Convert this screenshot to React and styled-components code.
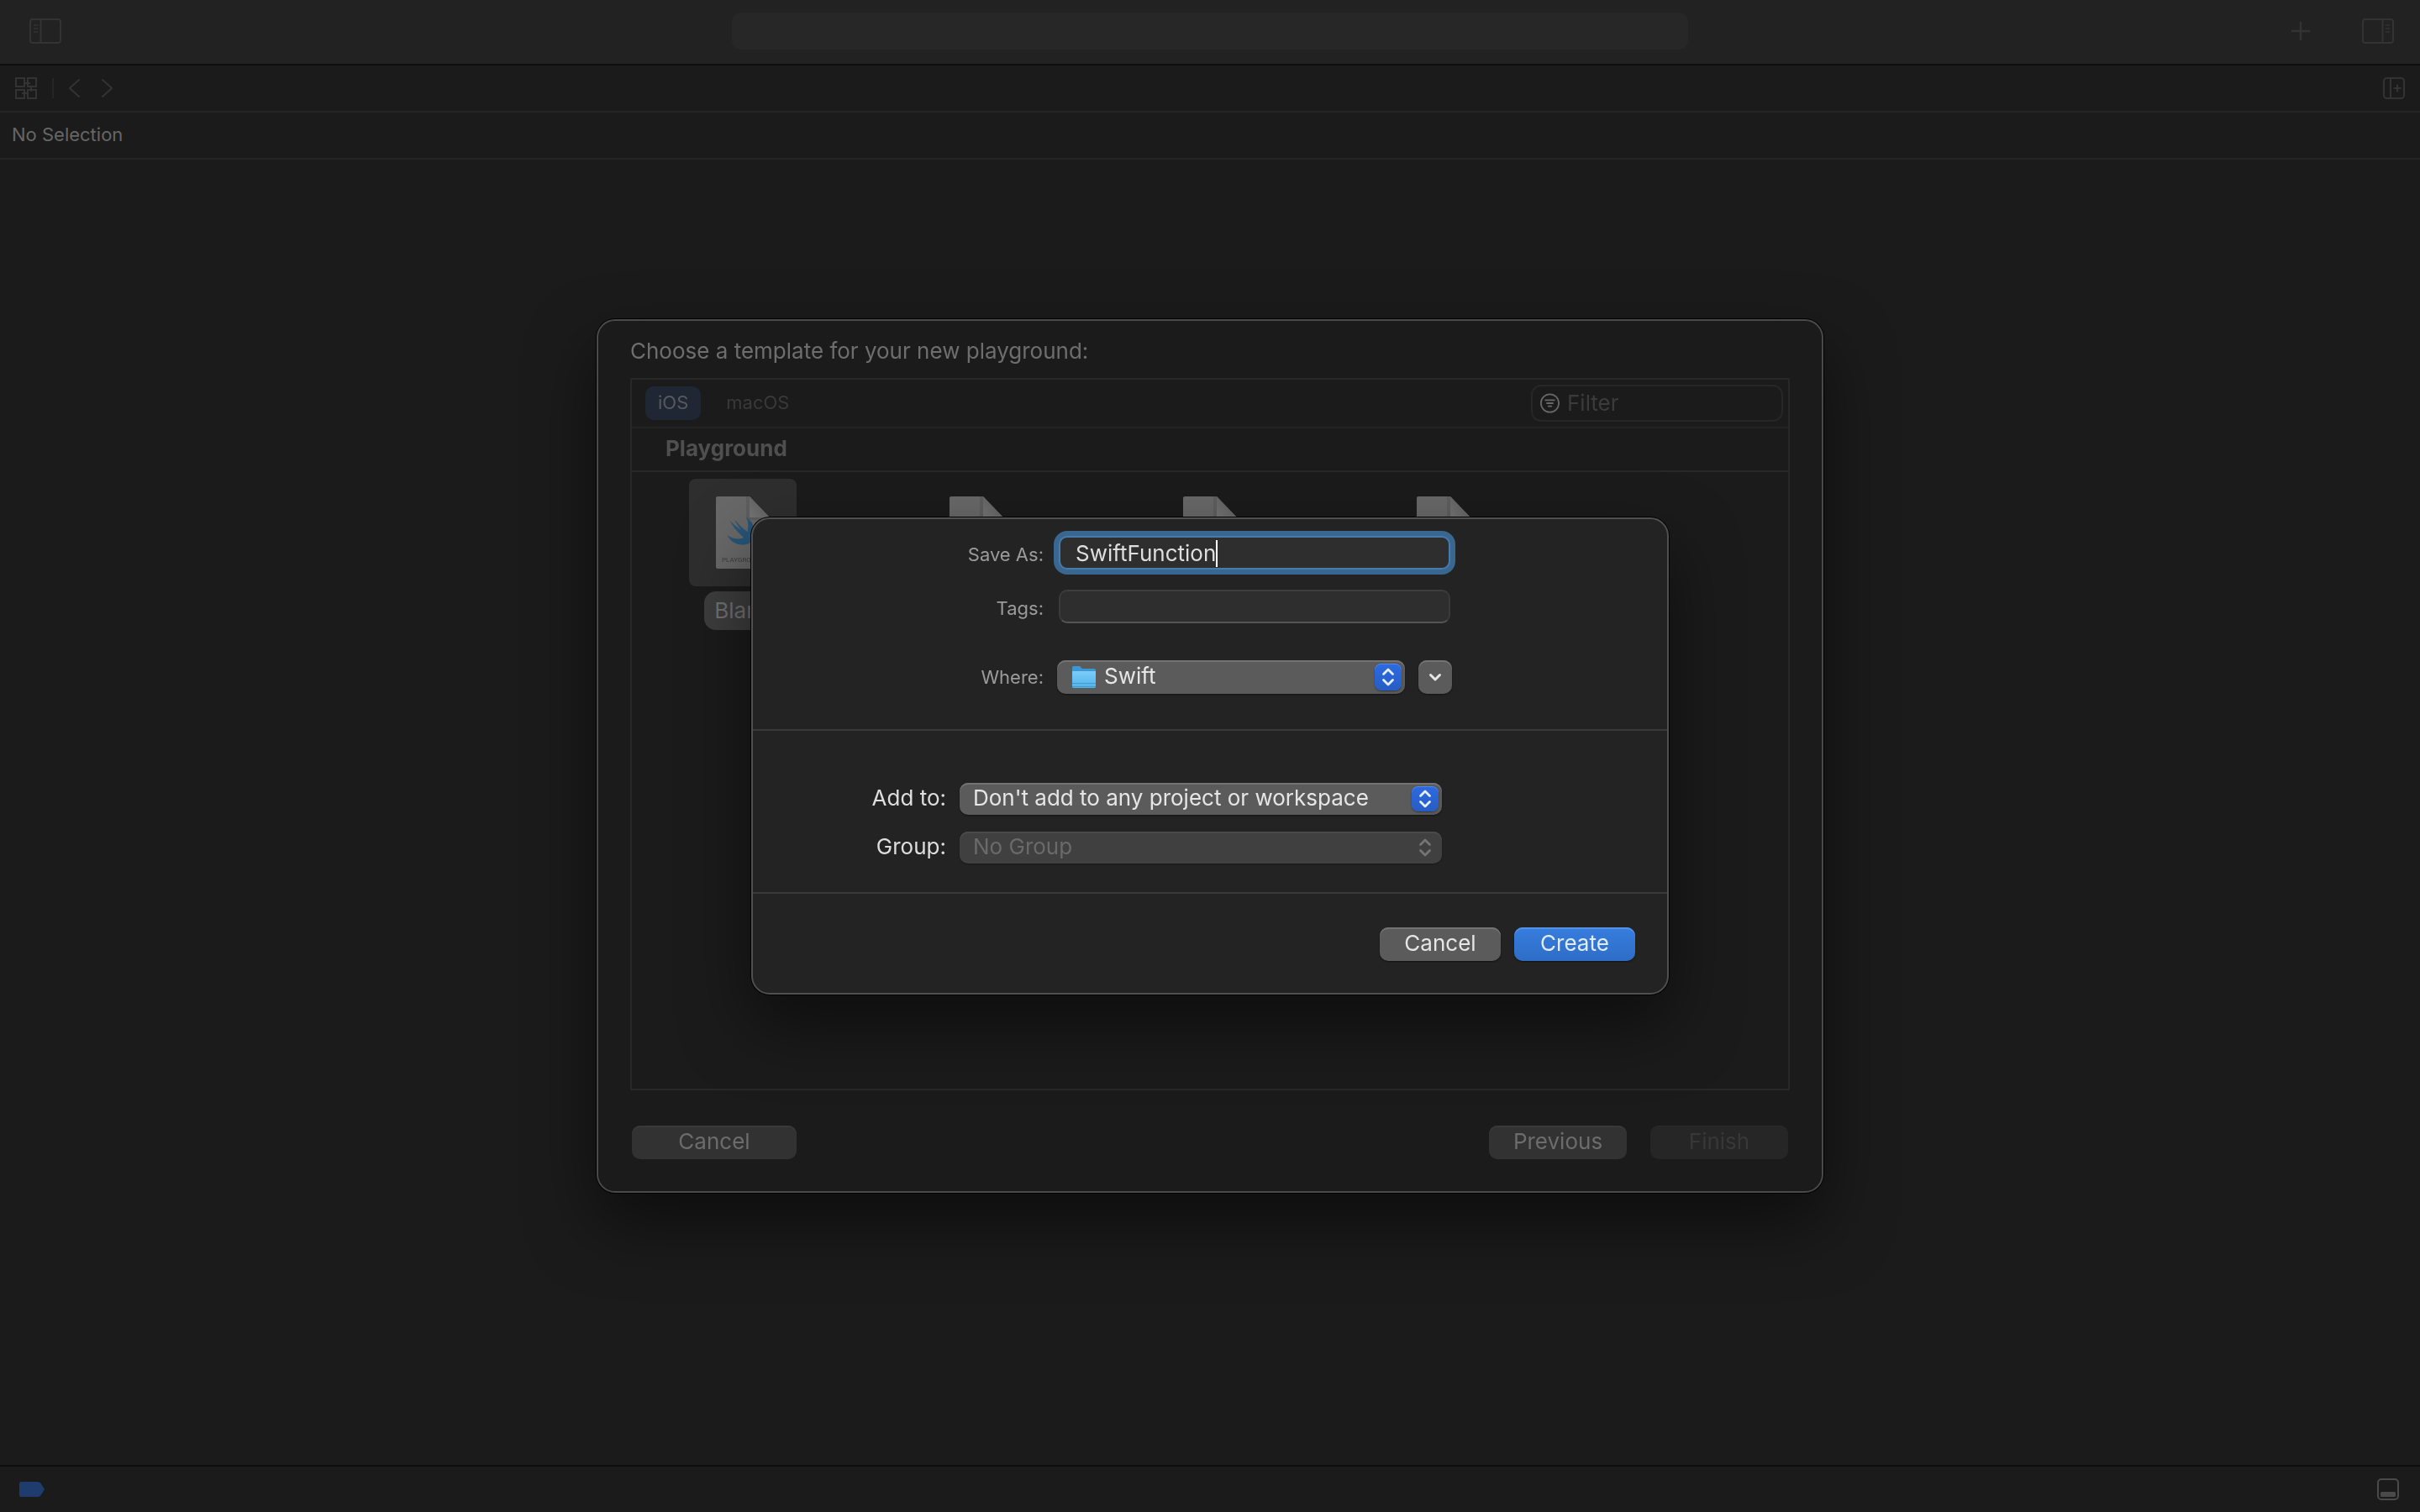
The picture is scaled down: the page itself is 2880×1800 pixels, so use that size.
import React, { useState } from 'react';
import styled, { createGlobalStyle, css } from 'styled-components';

const GlobalStyle = createGlobalStyle`
  *, *::before, *::after {
    box-sizing: border-box;
  }
  body {
    margin: 0;
    background: #1b1b1b;
    color: #dedede;
    font-family: Inter, "Liberation Sans", sans-serif;
    font-size: 26px;
    line-height: 32px;
  }
  button, input, select {
    margin: 0;
    font: inherit;
    color: inherit;
  }
`;

const Window = styled.div`
  min-height: 100vh;
  display: flex;
  flex-direction: column;
`;

const Toolbar = styled.header`
  display: grid;
  grid-template-columns: 1fr minmax(0, 1138px) 1fr;
  align-items: center;
  height: 78px;
  padding: 0 31px 2px;
  background: #222222;
  border-bottom: 2px solid #0e0e0e;
`;

const ToolGroup = styled.div`
  display: flex;
  align-items: center;
  justify-content: ${({ $end }) => ($end ? 'flex-end' : 'flex-start')};
  gap: ${({ $gap }) => $gap || 0}px;
  padding-left: ${({ $inset }) => $inset || 0}px;
`;

const ActivityView = styled.div`
  height: 44px;
  border-radius: 10px;
  background: #272727;
`;

const IconButton = styled.button`
  display: flex;
  padding: 0;
  border: 0;
  background: none;
  color: #333333;
`;

const Bar = styled.nav`
  display: flex;
  align-items: center;
  justify-content: space-between;
  height: 56px;
  padding: 0 18px;
  border-bottom: 2px solid #252525;
`;

const JumpBar = styled(Bar)`
  padding: 0 14px 2px;
  font-size: 22px;
  line-height: 28px;
  color: #666666;
`;

const Separator = styled.span`
  width: 2px;
  height: 24px;
  background: #262626;
`;

const Editor = styled.main`
  flex: 1;
`;

const DebugBar = styled.footer`
  display: flex;
  align-items: center;
  justify-content: space-between;
  height: 56px;
  padding: 0 25px 0 23px;
  border-top: 2px solid #0e0e0e;
`;

const Overlay = styled.div`
  position: fixed;
  inset: 0;
  display: grid;
  place-items: center;
`;

const panel = css`
  max-width: 100%;
  border: 2px solid #4a4a4a;
  border-radius: 22px;
`;

const Sheet = styled.section`
  ${panel}
  width: 1460px;
  padding: 20px 38px 38px;
  background: #1b1b1b;
  box-shadow: 0 0 0 1px #000, 0 36px 80px rgba(0, 0, 0, 0.5);
`;

const SheetTitle = styled.h1`
  margin: 0 0 16px;
  font-size: 26px;
  font-weight: 400;
  line-height: 32px;
  color: #6e6e6e;
`;

const Gallery = styled.div`
  height: 848px;
  border: 2px solid #282828;
`;

const PlatformBar = styled.div`
  display: flex;
  align-items: center;
  justify-content: space-between;
  height: 58px;
  padding: 0 6px 0 16px;
  border-bottom: 2px solid #232323;
`;

const Platform = styled.button`
  height: 40px;
  padding: 0 15px 2px;
  border: 0;
  border-radius: 10px;
  font-size: 22px;
  line-height: 28px;
  background: ${({ $active }) => ($active ? '#1e2733' : 'transparent')};
  color: ${({ $active }) => ($active ? '#565a5f' : '#393939')};
`;

const FilterField = styled.label`
  display: flex;
  align-items: center;
  gap: 9px;
  width: 300px;
  height: 44px;
  padding: 0 8px 0 9px;
  border: 2px solid #272727;
  border-radius: 12px;
  color: #686868;
`;

const FilterInput = styled.input`
  width: 100%;
  padding: 0;
  border: 0;
  outline: 0;
  background: none;
  &::placeholder {
    color: #3b3b3b;
    opacity: 1;
  }
`;

const GroupTitle = styled.h2`
  margin: 0;
  padding: 8px 40px 10px;
  border-bottom: 2px solid #282828;
  font-size: 26px;
  font-weight: 700;
  line-height: 32px;
  color: #4f4f4f;
`;

const Templates = styled.div`
  display: grid;
  grid-template-columns: repeat(4, 278px);
  padding-top: 8px;
`;

const Template = styled.button`
  display: flex;
  flex-direction: column;
  align-items: center;
  gap: 6px;
  width: 264px;
  padding: 0;
  border: 0;
  background: none;
`;

const Thumb = styled.span`
  display: flex;
  justify-content: center;
  width: 128px;
  height: 128px;
  padding-top: 21px;
  border-radius: 8px;
  background: ${({ $selected }) => ($selected ? '#2e2e2e' : 'transparent')};
`;

const TemplateName = styled.span`
  height: 46px;
  padding: 7px 12px;
  border-radius: 14px;
  background: #3d3d3d;
  color: #707070;
`;

const SheetFooter = styled.div`
  display: flex;
  gap: 28px;
  margin-top: 42px;
  padding: 0 2px;
`;

const tones = {
  dimmed: css`
    background: #323232;
    color: #6c6c6c;
    box-shadow: inset 0 2px 0 #393939;
  `,
  disabled: css`
    background: #262626;
    color: #383838;
    box-shadow: inset 0 1px 0 #2a2a2a;
  `,
  normal: css`
    background: #5b5b5b;
    color: #e6e6e6;
    box-shadow: inset 0 2px 0 #737373, 0 1px 2px rgba(0, 0, 0, 0.5);
  `,
  primary: css`
    background: linear-gradient(#367ddf, #2e6dc6);
    color: #e2ebf8;
    box-shadow: inset 0 2px 0 #5591e5, 0 1px 2px rgba(0, 0, 0, 0.5);
  `,
};

const PushButton = styled.button`
  width: ${({ $width }) => $width}px;
  height: 40px;
  padding: 0 0 2px;
  border: 0;
  border-radius: 10px;
  ${({ $tone }) => tones[$tone]}
  &:first-child {
    margin-right: ${({ $spread }) => ($spread ? 'auto' : '0')};
  }
`;

const SaveDialog = styled.form`
  ${panel}
  width: 1092px;
  border-color: #505050;
  background: #232323;
  box-shadow: 0 0 0 1px #000, 0 36px 80px rgba(0, 0, 0, 0.5);
`;

const SaveSection = styled.div`
  display: flex;
  flex-direction: column;
  gap: 24px;
  padding: 20px 0 42px;
  border-bottom: 2px solid #3a3a3a;
`;

const TargetSection = styled(SaveSection)`
  gap: 20px;
  padding: 62px 0 34px;
`;

const FormRow = styled.div`
  display: grid;
  grid-template-columns: ${({ $wide }) => ($wide ? '230px 574px' : '346px 470px')};
  column-gap: 16px;
  align-items: baseline;
  margin-top: ${({ $spaced }) => ($spaced ? 20 : 0)}px;
`;

const FormLabel = styled.label`
  text-align: right;
  font-size: ${({ $small }) => ($small ? 22 : 26)}px;
  line-height: 28px;
  color: ${({ $small }) => ($small ? '#9b9b9b' : '#dedede')};
`;

const TextBox = styled.div`
  display: flex;
  align-items: center;
  height: 40px;
  margin: 0 2px;
  padding: 2px 18px 0;
  border: 2px solid;
  border-color: #3d3d3d #3a3a3a #555555;
  border-radius: 10px;
  background: #2e2e2e;
  ${({ $focused }) =>
    $focused &&
    css`
      border-color: #467bab;
      box-shadow: 0 0 0 6px #39678f;
    `}
`;

const TextInput = styled.input`
  field-sizing: content;
  height: 32px;
  padding: 0;
  border: 0;
  outline: 0;
  background: none;
  caret-color: transparent;
  flex: ${({ $fill }) => ($fill ? 1 : 'none')};
`;

const Caret = styled.span`
  width: 2px;
  height: 32px;
  background: #ffffff;
`;

const WhereControls = styled.div`
  display: flex;
  align-items: baseline;
  gap: 16px;
`;

// select, leading icon and stepper share a single grid cell
const PopUp = styled.div`
  display: grid;
  flex: 1;
  align-items: center;
  > * {
    grid-area: 1 / 1;
  }
  > svg, > span {
    pointer-events: none;
  }
`;

const PopUpSelect = styled.select`
  appearance: none;
  width: 100%;
  height: ${({ $tall }) => ($tall ? 40 : 38)}px;
  padding: 0 50px 2px ${({ $icon }) => ($icon ? 56 : 16)}px;
  border: 0;
  border-radius: 10px;
  line-height: 32px;
  ${tones.normal}
  &:disabled {
    opacity: 1;
    background: #404040;
    color: #6a6a6a;
    box-shadow: inset 0 2px 0 #4b4b4b, 0 1px 2px rgba(0, 0, 0, 0.3);
  }
`;

const Stepper = styled.span`
  display: flex;
  align-items: center;
  justify-content: center;
  justify-self: end;
  width: 32px;
  height: calc(100% - 8px);
  margin-right: 4px;
  border-radius: 8px;
  color: #e6eefc;
  ${({ $off }) =>
    $off
      ? css`
          color: #757575;
        `
      : css`
          background: linear-gradient(#2d6be0, #275cc4);
          box-shadow: inset 0 1px 0 #5187ea, 0 1px 2px rgba(0, 0, 0, 0.4);
        `}
`;

const FolderSvg = styled.svg`
  margin-left: 18px;
`;

const ExpandButton = styled.button`
  display: flex;
  align-items: center;
  justify-content: center;
  align-self: stretch;
  width: 40px;
  padding: 0;
  border: 0;
  border-radius: 10px;
  ${tones.normal}
`;

const DialogFooter = styled.div`
  display: flex;
  justify-content: flex-end;
  gap: 16px;
  padding: 40px 38px 38px;
`;

const SidebarIcon = ({ flip }) => (
  <svg width="38" height="30" viewBox="0 0 38 30" fill="none" stroke="currentColor" strokeWidth="2">
    <g transform={flip ? 'translate(38 0) scale(-1 1)' : undefined}>
      <rect x="1" y="1" width="36" height="28" rx="3" />
      <path d="M13.5 1v28" />
      <path d="M5 8h5M5 12h5M5 16h5" strokeWidth="1.6" />
    </g>
  </svg>
);

const PlusIcon = () => (
  <svg width="24" height="24" viewBox="0 0 24 24" stroke="currentColor" strokeWidth="2.6" strokeLinecap="round">
    <path d="M12 2v20M2 12h20" />
  </svg>
);

const RelatedIcon = () => (
  <svg width="26" height="26" viewBox="0 0 26 26" fill="none" stroke="currentColor" strokeWidth="2">
    <path d="M1 1h10v10H1zM15 1h10v10H15zM1 15h10v10H1zM15 15h10v10H15z" />
    <path d="M11 7h7M19 11v6M8 19h7" />
  </svg>
);

const ChevronIcon = ({ right }) => (
  <svg width="13" height="24" viewBox="0 0 13 24" fill="none" stroke="currentColor" strokeWidth="2" strokeLinecap="round">
    <path d={right ? 'M1 2l11 10L1 22' : 'M12 2L1 12l11 10'} />
  </svg>
);

const AddEditorIcon = () => (
  <svg width="26" height="26" viewBox="0 0 26 26" fill="none" stroke="currentColor" strokeWidth="2">
    <rect x="1" y="1" width="24" height="24" rx="3.5" />
    <path d="M9 1v24M12.5 13h9M17 8.5v9" />
  </svg>
);

const DebugAreaIcon = () => (
  <svg width="26" height="26" viewBox="0 0 26 26" fill="none">
    <rect x="1" y="1" width="24" height="24" rx="4" stroke="#4a4a4a" strokeWidth="2" />
    <rect x="4" y="16" width="18" height="6" rx="1.5" fill="#4a4a4a" />
  </svg>
);

const BreakpointIcon = () => (
  <svg width="30" height="18" viewBox="0 0 30 18">
    <path d="M2.5 0H22q2.500 0 4 2.500l4 6.500-4 6.500q-1.500 2.500-4 2.500H2.500Q0 18 0 15.500v-13Q0 0 2.500 0z" fill="#1f3c6e" />
  </svg>
);

const FilterIcon = () => (
  <svg width="26" height="26" viewBox="0 0 26 26" fill="none" stroke="currentColor" strokeWidth="2" strokeLinecap="round">
    <circle cx="13" cy="13" r="12" />
    <path d="M7 9h12M9 13h8M11 17h4" />
  </svg>
);

const StepperIcon = () => (
  <svg width="16" height="24" viewBox="0 0 16 24" fill="none" stroke="currentColor" strokeWidth="2.8" strokeLinecap="round" strokeLinejoin="round">
    <path d="M2.500 8.500L8 3l5.500 5.500M2.500 15.500L8 21l5.500-5.500" />
  </svg>
);

const DownIcon = () => (
  <svg width="16" height="12" viewBox="0 0 16 12" fill="none" stroke="currentColor" strokeWidth="3" strokeLinecap="round" strokeLinejoin="round">
    <path d="M2.500 3.500L8 9l5.500-5.500" />
  </svg>
);

const FolderIcon = () => (
  <FolderSvg width="28" height="28" viewBox="0 0 28 28">
    <defs>
      <linearGradient id="folder" x1="0" y1="0" x2="0" y2="1">
        <stop offset="0" stopColor="#79cdfb" />
        <stop offset="1" stopColor="#54b2e8" />
      </linearGradient>
    </defs>
    <path d="M0 3Q0 1 2 1h7l3 3h14q2 0 2 2v19q0 2-2 2H2q-2 0-2-2z" fill="#3e96d2" />
    <path d="M0 7h28v18q0 2-2 2H2q-2 0-2-2z" fill="url(#folder)" />
    <path d="M0 21.500h28M0 25.500h28" stroke="#3f9bd6" />
  </FolderSvg>
);

const PageIcon = ({ id, bird }) => (
  <svg width="64" height="88" viewBox="0 0 64 88">
    <defs>
      <linearGradient id={`fold-${id}`} x1="0" y1="1" x2="1" y2="0">
        <stop offset="0" stopColor="#767676" />
        <stop offset="1" stopColor="#585858" />
      </linearGradient>
    </defs>
    <path d="M2 0h38l24 25v59q0 2-2 2H2q-2 0-2-2V2q0-2 2-2z" fill="#686868" />
    <path d="M36 0h4v25h24v3H36z" fill="#5e5e5e" />
    <path d="M40 0l24 25H42q-2 0-2-2z" fill={`url(#fold-${id})`} />
    {bird && (
      <>
        <path
          d="M13.500 46C18 50 27 52 33 49 26 43 20 36 16.500 28.500 21 33.500 26 37.500 30 40 27 36 24 31.500 22 27.500 26 32 31 37.500 37.500 42 39 37 38.500 30 36.500 25 44 30 47.500 39 45.500 47 49 51 49 55 48 57 45.500 53 42.500 54 40 55.500 30 60.500 18 56 13.500 46z"
          fill="#285577"
        />
        <text x="7" y="78" fontFamily="Roboto, sans-serif" fontSize="8" fill="#3c3c3c">
          PLAYGROUND
        </text>
      </>
    )}
  </svg>
);

const templates = ['Blank', 'Game', 'Map', 'Single View'];

const TemplateSheet = () => {
  const [platform, setPlatform] = useState('iOS');

  return (
    <Sheet>
      <SheetTitle>Choose a template for your new playground:</SheetTitle>
      <Gallery>
        <PlatformBar>
          <ToolGroup $gap={15}>
            {['iOS', 'macOS'].map((name) => (
              <Platform key={name} type="button" $active={platform === name} onClick={() => setPlatform(name)}>
                {name}
              </Platform>
            ))}
          </ToolGroup>
          <FilterField>
            <FilterIcon />
            <FilterInput type="text" placeholder="Filter" aria-label="Filter" />
          </FilterField>
        </PlatformBar>
        <GroupTitle>Playground</GroupTitle>
        <Templates>
          {templates.map((name, i) => (
            <Template key={name} type="button" aria-label={name}>
              <Thumb $selected={i === 0}>
                <PageIcon id={i} bird={i === 0} />
              </Thumb>
              {i === 0 && <TemplateName>{name}</TemplateName>}
            </Template>
          ))}
        </Templates>
      </Gallery>
      <SheetFooter>
        <PushButton type="button" $width={196} $tone="dimmed" $spread>Cancel</PushButton>
        <PushButton type="button" $width={164} $tone="dimmed">Previous</PushButton>
        <PushButton type="button" $width={164} $tone="disabled" disabled>Finish</PushButton>
      </SheetFooter>
    </Sheet>
  );
};

const SaveAs = () => {
  const [name, setName] = useState('SwiftFunction');

  return (
    <SaveDialog onSubmit={(e) => e.preventDefault()}>
      <SaveSection>
        <FormRow>
          <FormLabel $small htmlFor="save-as">Save As:</FormLabel>
          <TextBox $focused>
            <TextInput id="save-as" type="text" value={name} onChange={(e) => setName(e.target.value)} />
            <Caret />
          </TextBox>
        </FormRow>
        <FormRow>
          <FormLabel $small htmlFor="tags">Tags:</FormLabel>
          <TextBox>
            <TextInput id="tags" type="text" $fill />
          </TextBox>
        </FormRow>
        <FormRow $spaced>
          <FormLabel $small htmlFor="where">Where:</FormLabel>
          <WhereControls>
            <PopUp>
              <PopUpSelect id="where" $tall $icon>
                <option>Swift</option>
              </PopUpSelect>
              <FolderIcon />
              <Stepper><StepperIcon /></Stepper>
            </PopUp>
            <ExpandButton type="button" aria-label="Expand"><DownIcon /></ExpandButton>
          </WhereControls>
        </FormRow>
      </SaveSection>
      <TargetSection>
        <FormRow $wide>
          <FormLabel htmlFor="add-to">Add to:</FormLabel>
          <PopUp>
            <PopUpSelect id="add-to">
              <option>Don't add to any project or workspace</option>
            </PopUpSelect>
            <Stepper><StepperIcon /></Stepper>
          </PopUp>
        </FormRow>
        <FormRow $wide>
          <FormLabel htmlFor="group">Group:</FormLabel>
          <PopUp>
            <PopUpSelect id="group" disabled>
              <option>No Group</option>
            </PopUpSelect>
            <Stepper $off><StepperIcon /></Stepper>
          </PopUp>
        </FormRow>
      </TargetSection>
      <DialogFooter>
        <PushButton type="button" $width={144} $tone="normal">Cancel</PushButton>
        <PushButton type="submit" $width={144} $tone="primary">Create</PushButton>
      </DialogFooter>
    </SaveDialog>
  );
};

const App = () => (
  <>
    <GlobalStyle />
    <Window>
      <Toolbar>
        <ToolGroup $inset={4}>
          <IconButton aria-label="Navigator"><SidebarIcon /></IconButton>
        </ToolGroup>
        <ActivityView />
        <ToolGroup $end $gap={61}>
          <IconButton aria-label="Library"><PlusIcon /></IconButton>
          <IconButton aria-label="Inspector"><SidebarIcon flip /></IconButton>
        </ToolGroup>
      </Toolbar>
      <Bar>
        <ToolGroup $gap={18}>
          <IconButton aria-label="Related items"><RelatedIcon /></IconButton>
          <Separator />
          <ToolGroup $gap={26}>
            <IconButton aria-label="Back"><ChevronIcon /></IconButton>
            <IconButton aria-label="Forward"><ChevronIcon right /></IconButton>
          </ToolGroup>
        </ToolGroup>
        <IconButton aria-label="Add editor"><AddEditorIcon /></IconButton>
      </Bar>
      <JumpBar>No Selection</JumpBar>
      <Editor />
      <DebugBar>
        <IconButton aria-label="Breakpoints"><BreakpointIcon /></IconButton>
        <IconButton aria-label="Debug area"><DebugAreaIcon /></IconButton>
      </DebugBar>
    </Window>
    <Overlay>
      <TemplateSheet />
    </Overlay>
    <Overlay>
      <SaveAs />
    </Overlay>
  </>
);

export default App;
